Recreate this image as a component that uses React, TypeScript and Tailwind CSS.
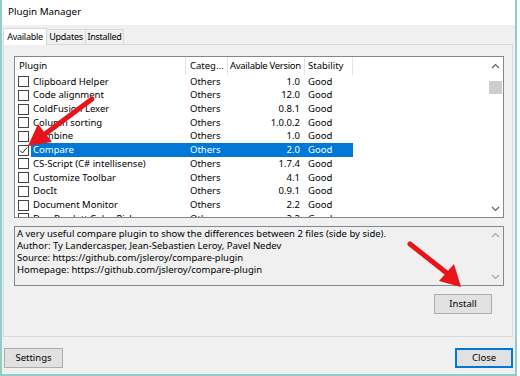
const font = { fontFamily: '"Noto Sans", "Open Sans", sans-serif' };

type Row = { name: string; cat: string; ver: string; stab: string; checked?: boolean; selected?: boolean };

const rows: Row[] = [
  { name: "Clipboard Helper", cat: "Others", ver: "1.0", stab: "Good" },
  { name: "Code alignment", cat: "Others", ver: "12.0", stab: "Good" },
  { name: "ColdFusion Lexer", cat: "Others", ver: "0.8.1", stab: "Good" },
  { name: "Column sorting", cat: "Others", ver: "1.0.0.2", stab: "Good" },
  { name: "Combine", cat: "Others", ver: "1.0", stab: "Good" },
  { name: "Compare", cat: "Others", ver: "2.0", stab: "Good", checked: true, selected: true },
  { name: "CS-Script (C# intellisense)", cat: "Others", ver: "1.7.4", stab: "Good" },
  { name: "Customize Toolbar", cat: "Others", ver: "4.1", stab: "Good" },
  { name: "DocIt", cat: "Others", ver: "0.9.1", stab: "Good" },
  { name: "Document Monitor", cat: "Others", ver: "2.2", stab: "Good" },
  { name: "Don Rowlett Color Picker", cat: "Others", ver: "2.2", stab: "Good" },
];

function Chevron({ up }: { up?: boolean }) {
  return (
    <svg width="9" height="6" viewBox="0 0 9 6" className="block">
      <path d={up ? "M1 5 L4.5 1.5 L8 5" : "M1 1 L4.5 4.5 L8 1"} fill="none" stroke="#606060" strokeWidth="1.2" />
    </svg>
  );
}

function Check({ on }: { on?: boolean }) {
  return (
    <div className="w-[11px] h-[11px] border border-[#444] bg-white flex items-center justify-center shrink-0">
      {on && (
        <svg width="9" height="9" viewBox="0 0 9 9">
          <path d="M1 4.5 L3.5 7 L8 1.5" fill="none" stroke="#222" strokeWidth="1" />
        </svg>
      )}
    </div>
  );
}

function Btn({ label, active, w }: { label: string; active?: boolean; w: string }) {
  return (
    <div
      className={`${w} h-[20px] flex items-center justify-center text-[9.5px] text-black bg-[#e1e1e1] border ${
        active ? "border-[#0078d7] border-2" : "border-[#adadad]"
      }`}
    >
      {label}
    </div>
  );
}

export default function App() {
  return (
    <div style={font} className="w-[520px] h-[376px] bg-white overflow-hidden relative">
      <div className="w-[517px] h-[376px] border-l-2 border-r-2 border-b-2 border-[#8fcfca] bg-[#f0f0f0] flex flex-col">
        <div className="h-[25px] bg-white flex items-center pl-[6px] text-[9.8px] text-black shrink-0">Plugin Manager</div>

        <div className="px-[1px] pt-[2px] flex flex-col">
          <div className="flex h-[17px] items-end text-[9px] tracking-[-0.25px] text-black whitespace-nowrap">
            <div className="h-[17px] w-[44px] bg-white border border-b-0 border-[#d9d9d9] flex items-center justify-center relative top-[1px]">Available</div>
            <div className="h-[15px] w-[39px] border border-b-0 border-l-0 border-[#d9d9d9] flex items-center justify-center">Updates</div>
            <div className="h-[15px] w-[38px] border border-b-0 border-l-0 border-[#d9d9d9] flex items-center justify-center">Installed</div>
          </div>

          <div className="h-[293px] w-[510px] border border-[#d9d9d9] bg-[#f0f0f0] pl-[10px] pt-[11px] flex flex-col">
            <div className="w-[490px] h-[162px] border border-[#828790] bg-white flex">
              <div className="flex-1 flex flex-col overflow-hidden text-[9.5px] text-black whitespace-nowrap">
                <div className="h-[18px] flex items-center shrink-0">
                  <div className="w-[171px] h-full pl-[4px] flex items-center border-r border-[#e5e5e5]">Plugin</div>
                  <div className="w-[42px] h-full pl-[4px] flex items-center border-r border-[#e5e5e5] overflow-hidden">Categ...</div>
                  <div className="w-[77px] h-full pl-[2px] flex items-center border-r border-[#e5e5e5] tracking-[-0.3px]">Available Version</div>
                  <div className="w-[48px] h-full pl-[3px] flex items-center border-r border-[#e5e5e5]">Stability</div>
                </div>
                {rows.map((r) => (
                  <div key={r.name} className="h-[13.7px] flex items-center shrink-0">
                    <div className="w-[16px] pl-[3px] shrink-0">
                      <Check on={r.checked} />
                    </div>
                    <div className={`flex h-full items-center ${r.selected ? "bg-[#0078d7] text-white" : ""}`}>
                      <div className="w-[155px] pl-[2px] overflow-hidden">{r.name}</div>
                      <div className="w-[42px] pl-[4px]">{r.cat}</div>
                      <div className="w-[77px] pr-[5px] text-right">{r.ver}</div>
                      <div className="w-[48px] pl-[3px]">{r.stab}</div>
                    </div>
                  </div>
                ))}
              </div>
              <div className="w-[16px] h-full flex flex-col items-center bg-white">
                <div className="h-[18px] flex items-center justify-center">
                  <Chevron up />
                </div>
                <div className="w-[13px] h-[13px] bg-[#cdcdcd] mt-[6px]" />
                <div className="flex-1" />
                <div className="h-[16px] flex items-center justify-center">
                  <Chevron />
                </div>
              </div>
            </div>

            <div className="w-[490px] h-[60px] mt-[8px] border border-[#828790] bg-[#f0f0f0] flex">
              <div className="flex-1 pl-[2px] pt-[1px] text-[9.5px] leading-[12px] text-black whitespace-nowrap">
                <div>A very useful compare plugin to show the differences between 2 files (side by side).</div>
                <div>Author: Ty Landercasper, Jean-Sebastien Leroy, Pavel Nedev</div>
                <div>Source: https://github.com/jsleroy/compare-plugin</div>
                <div>Homepage: https://github.com/jsleroy/compare-plugin</div>
              </div>
              <div className="w-[16px] flex flex-col items-center justify-between py-[5px] opacity-50">
                <Chevron up />
                <Chevron />
              </div>
            </div>

            <div className="w-[490px] flex justify-end pr-[12px] mt-[8px]">
              <Btn label="Install" w="w-[58px]" />
            </div>
          </div>
        </div>

        <div className="flex justify-between items-center px-[2px] mt-[11px]">
          <Btn label="Settings" w="w-[59px]" />
          <Btn label="Close" active w="w-[58px]" />
        </div>
      </div>

      <svg className="absolute left-0 top-0 pointer-events-none" width="520" height="376">
        <line x1="92" y1="99" x2="45" y2="134" stroke="#e8141a" strokeWidth="5" strokeLinecap="round" />
        <polygon points="28,146 38,124 52,142" fill="#e8141a" />
        <line x1="410" y1="244" x2="448" y2="274" stroke="#e8141a" strokeWidth="5" strokeLinecap="round" />
        <polygon points="461,287 439,281 454,264" fill="#e8141a" />
      </svg>
    </div>
  );
}
